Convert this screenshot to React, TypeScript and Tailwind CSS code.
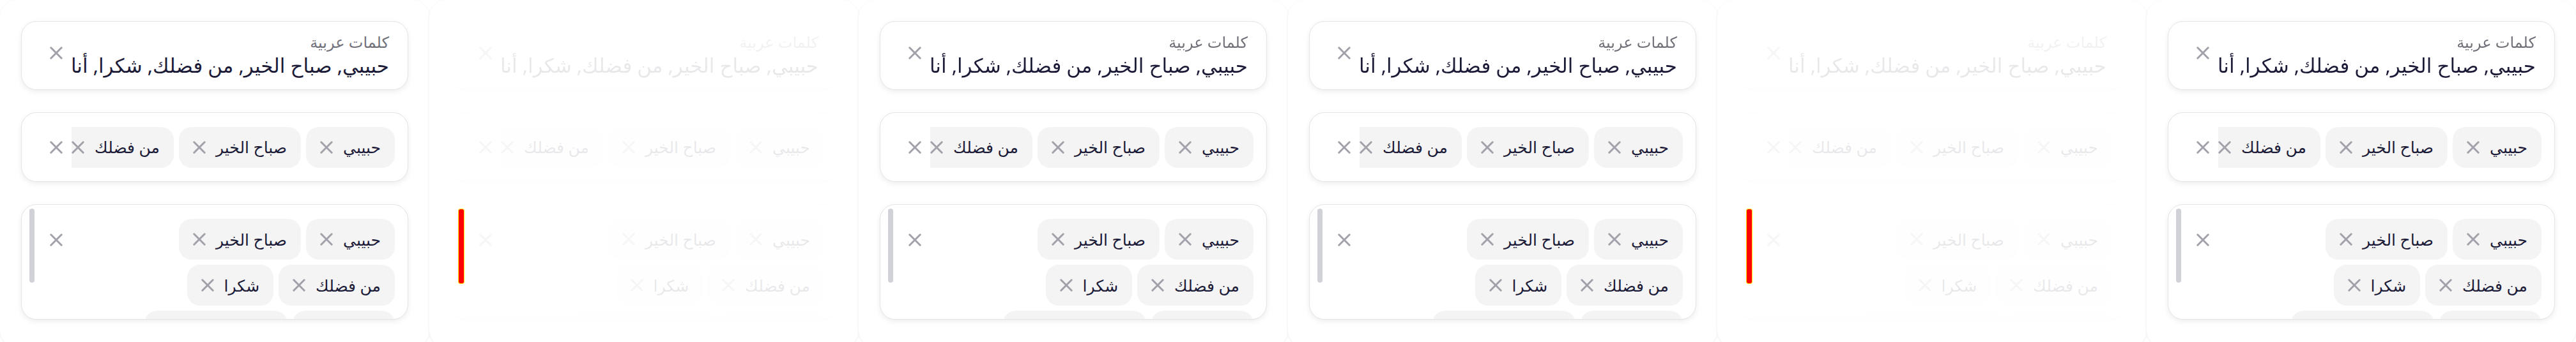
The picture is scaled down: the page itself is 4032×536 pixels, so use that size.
import React from 'react';
import clsx from 'clsx';

const words = ['حبيبي', 'صباح الخير', 'من فضلك', 'شكرا'];

const ClearIcon: React.FC = () => (
  <svg width="20" height="20" viewBox="0 0 20 20" fill="none" stroke="currentColor" strokeWidth="3" strokeLinecap="round" className="shrink-0">
    <path d="M1.8 1.8 18.2 18.2M18.2 1.8 1.8 18.2" />
  </svg>
);

const Chip: React.FC<{ label: string; className?: string }> = ({ label, className }) => (
  <div className={clsx('flex h-[64px] shrink-0 items-center gap-[16px] rounded-[20px] bg-[#f4f4f5] px-[22px]', className)}>
    <span className="whitespace-nowrap text-[25px] leading-none text-[#1b1b38]">{label}</span>
    <span className="text-[#a1a1aa]">
      <ClearIcon />
    </span>
  </div>
);

const cardBase = 'rounded-[24px] border border-[#e4e4e7] bg-white shadow-[0_3px_8px_rgba(0,0,0,0.07)]';

const Panel: React.FC<{ faded?: boolean }> = ({ faded }) => {
  return (
    <div className="relative h-[545px] w-[672px] shrink-0 rounded-[28px] bg-white shadow-[0_1px_4px_rgba(0,0,0,0.07)]">
      <div className={clsx('flex flex-col gap-[35px] px-[33px] pt-[33px]', faded && 'opacity-10')}>
        {/* single value input */}
        <div dir="rtl" className={clsx(cardBase, 'flex h-[108px] items-center pl-[44px] pr-[29px]')}>
          <div className="flex min-w-0 flex-1 flex-col">
            <span className="text-[24px] font-normal leading-[30px] text-[#71717a]">كلمات عربية</span>
            <span className="truncate text-[31px] leading-[42px] text-[#1b1b38]">
              حبيبي, صباح الخير, من فضلك, شكرا, أنا
            </span>
          </div>
          <span className="-mt-[8px] text-[#a1a1aa]">
            <ClearIcon />
          </span>
        </div>

        {/* single line chips */}
        <div dir="rtl" className={clsx(cardBase, 'flex h-[109px] items-center gap-[14px] pl-[44px] pr-[20px]')}>
          <div className="flex min-w-0 flex-1 gap-2 overflow-hidden">
            {words.map((w) => (
              <Chip key={w} label={w} />
            ))}
          </div>
          <span className="text-[#a1a1aa]">
            <ClearIcon />
          </span>
        </div>

        {/* multi line chips */}
        <div dir="rtl" className={clsx(cardBase, 'relative flex h-[181px] overflow-hidden pl-[44px] pr-[20px] pt-[22px]')}>
          <div className="flex w-[460px] flex-wrap content-start gap-2">
            {words.map((w) => (
              <Chip key={w} label={w} />
            ))}
            <Chip label="أنا" className="w-[160px]" />
            <Chip label="مع السلامة" className="w-[224px]" />
          </div>
          <div className="flex flex-1 justify-end pt-[23px]">
            <span className="text-[#a1a1aa]">
              <ClearIcon />
            </span>
          </div>
          {!faded && <div className="absolute left-[12px] top-[6px] h-[116px] w-[8px] rounded-full bg-[#d1d1d8]" />}
        </div>
      </div>
      {faded && (
        <div className="absolute left-[46px] top-[328px] h-[116px] w-[8px] rounded-[2px] bg-[#ff0000] outline outline-1 outline-[#ffe600]" />
      )}
    </div>
  );
};

const App: React.FC = () => {
  return (
    <div className="flex h-[536px] w-[4032px] overflow-hidden bg-white font-['Noto_Sans','DejaVu_Sans',sans-serif]">
      <Panel />
      <Panel faded />
      <Panel />
      <Panel />
      <Panel faded />
      <Panel />
    </div>
  );
};

export default App;
